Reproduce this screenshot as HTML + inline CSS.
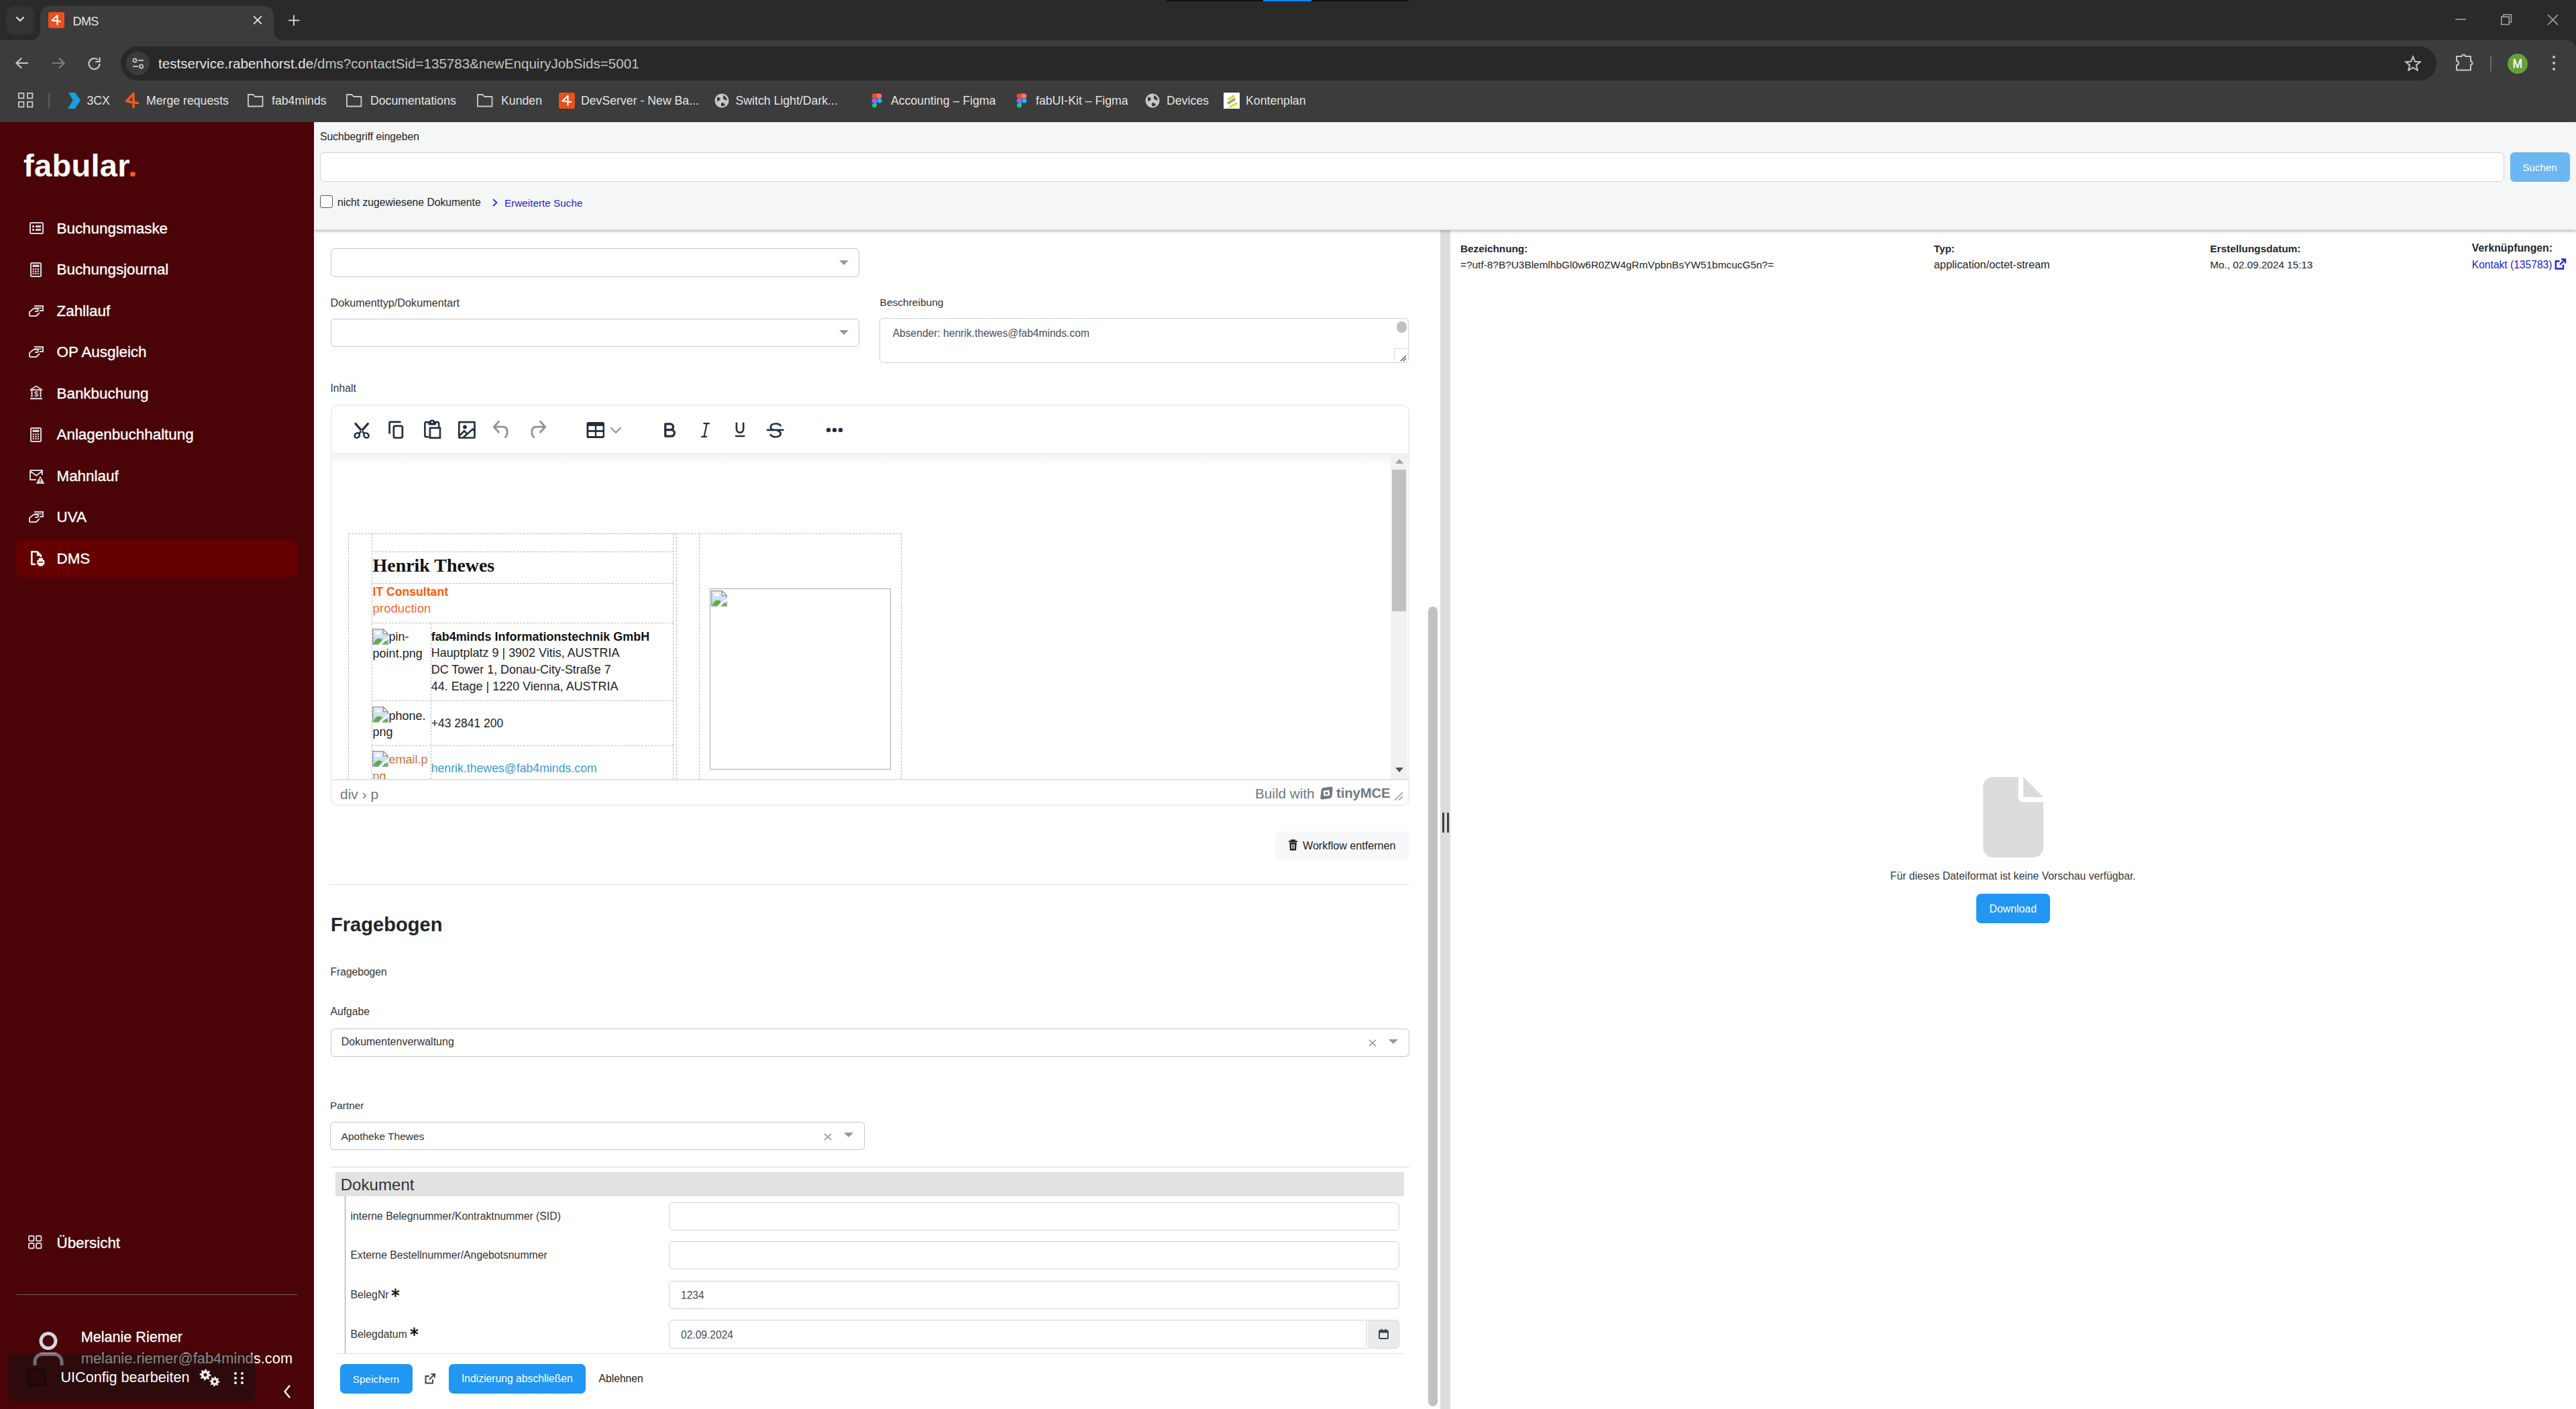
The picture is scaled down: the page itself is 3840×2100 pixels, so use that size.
<!DOCTYPE html><html><head><meta charset='utf-8'><title>DMS</title><style>html,body{margin:0;padding:0;width:3840px;height:2100px;overflow:hidden;background:#fff;}body{position:relative;font-family:'Liberation Sans',sans-serif;}.a{position:absolute;}.t{white-space:nowrap;}</style></head><body>
<div class='a' style='left:0.00px;top:0.00px;width:3840.00px;height:80.00px;background:#2a2a2a;'></div>
<div class='a' style='left:1739.00px;top:0.00px;width:361.00px;height:2.00px;background:#101010;'></div>
<div class='a' style='left:1883.00px;top:0.00px;width:72.00px;height:2.00px;background:#0a84ff;'></div>
<div class='a' style='left:9.00px;top:9.00px;width:42.00px;height:42.00px;background:#333333;border-radius:12px;'></div>
<svg class='a' style='left:23.00px;top:24.00px;' width='14.00' height='10.00' viewBox='0 0 14 10'><path d='M2 2 L7 7 L12 2' fill='none' stroke='#e3e3e3' stroke-width='2.2' stroke-linecap='round' stroke-linejoin='round'/></svg>
<div class='a' style='left:60.00px;top:9.00px;width:348.00px;height:51.00px;background:#3c3c3c;border-radius:14px 14px 0 0;'></div>
<svg class='a' style='left:46.00px;top:46.00px;' width='14.00' height='14.00' viewBox='0 0 14 14'><path d='M14 0 V14 H0 A14 14 0 0 0 14 0Z' fill='#3c3c3c'/></svg>
<svg class='a' style='left:408.00px;top:46.00px;' width='14.00' height='14.00' viewBox='0 0 14 14'><path d='M0 0 V14 H14 A14 14 0 0 1 0 0Z' fill='#3c3c3c'/></svg>
<div class='a' style='left:72.00px;top:18.00px;width:24.00px;height:24.00px;background:#e8501e;border-radius:3px;'></div>
<svg class='a' style='left:72.00px;top:18.00px;' width='24.00' height='24.00' viewBox='0 0 24 24'><path d='M13.5 5 L5.5 12.5 L18 14 M13.5 5 V18.6' fill='none' stroke='#fff' stroke-width='2.2' stroke-linecap='round' stroke-linejoin='round'/></svg>
<div class='a t' style="left:108.60px;top:22.70px;font-size:18px;line-height:18px;color:#e3e3e3;letter-spacing:-0.7px;">DMS</div>
<svg class='a' style='left:377.00px;top:23.00px;' width='14.00' height='14.00' viewBox='0 0 14 14'><path d='M1.8 1.8 L12.2 12.2 M12.2 1.8 L1.8 12.2' stroke='#e3e3e3' stroke-width='1.9' stroke-linecap='square'/></svg>
<svg class='a' style='left:429.00px;top:21.00px;' width='18.00' height='18.00' viewBox='0 0 18 18'><path d='M9 2.2 V16.6 M1.8 9.4 H16.6' stroke='#dcdcdc' stroke-width='1.9' stroke-linecap='round'/></svg>
<svg class='a' style='left:3660.00px;top:28.00px;' width='17.00' height='3.00' viewBox='0 0 17 3'><rect x='0' y='0' width='16' height='1.6' fill='#a2a2a2'/></svg>
<svg class='a' style='left:3728.00px;top:21.00px;' width='17.00' height='17.00' viewBox='0 0 17 17'><rect x='0.8' y='4' width='11.5' height='11.5' fill='none' stroke='#a2a2a2' stroke-width='1.6'/><path d='M4 4 V0.8 H15.5 V12.3 H12.3' fill='none' stroke='#a2a2a2' stroke-width='1.6'/></svg>
<svg class='a' style='left:3797.00px;top:21.00px;' width='17.00' height='17.00' viewBox='0 0 17 17'><path d='M1 1 L16 16 M16 1 L1 16' stroke='#a2a2a2' stroke-width='1.6'/></svg>
<div class='a' style='left:0.00px;top:60.00px;width:3840.00px;height:122.00px;background:#3c3c3c;border-radius:14px 14px 0 0;'></div>
<div class='a' style='left:0.00px;top:60.00px;width:60.00px;height:20.00px;background:#3c3c3c;'></div>
<svg class='a' style='left:22.00px;top:84.00px;' width='22.00' height='20.00' viewBox='0 0 22 20'><path d='M20 10 H3 M10 2.5 L2.5 10 L10 17.5' fill='none' stroke='#c7c7c7' stroke-width='2.2' stroke-linejoin='miter'/></svg>
<svg class='a' style='left:76.00px;top:84.00px;' width='22.00' height='20.00' viewBox='0 0 22 20'><path d='M2 10 H19 M12 2.5 L19.5 10 L12 17.5' fill='none' stroke='#7d7d7d' stroke-width='2.2'/></svg>
<svg class='a' style='left:130.00px;top:84.00px;' width='22.00' height='22.00' viewBox='0 0 22 22'><path d='M18.5 11 A8 8 0 1 1 16 5.2' fill='none' stroke='#c7c7c7' stroke-width='2.2'/><path d='M18.5 1.5 V8 H12' fill='none' stroke='#c7c7c7' stroke-width='2.2'/></svg>
<div class='a' style='left:180.00px;top:69.00px;width:3452.00px;height:51.00px;background:#282828;border-radius:26px;'></div>
<div class='a' style='left:188.00px;top:77.00px;width:35.00px;height:35.00px;background:#3c3c3c;border-radius:18px;'></div>
<svg class='a' style='left:196.00px;top:85.00px;' width='20.00' height='20.00' viewBox='0 0 20 20'><circle cx='5' cy='5' r='2.6' fill='none' stroke='#c7c7c7' stroke-width='1.8'/><path d='M10 5 H18' stroke='#c7c7c7' stroke-width='1.8'/><circle cx='14.5' cy='14' r='2.6' fill='none' stroke='#c7c7c7' stroke-width='1.8'/><path d='M2 14 H10' stroke='#c7c7c7' stroke-width='1.8'/></svg>
<div class='a t' style="left:236.00px;top:85.29px;font-size:20.6px;line-height:20.6px;color:#e3e3e3;">testservice.rabenhorst.de<span style='color:#c2c2c2'>/dms?contactSid=135783&amp;newEnquiryJobSids=5001</span></div>
<svg class='a' style='left:3584.00px;top:82.00px;' width='26.00' height='24.00' viewBox='0 0 26 24'><path d='M13 2.5 L16 9.8 L23.8 10.3 L17.8 15.2 L19.8 22.8 L13 18.6 L6.2 22.8 L8.2 15.2 L2.2 10.3 L10 9.8Z' fill='none' stroke='#c7c7c7' stroke-width='2' stroke-linejoin='miter'/></svg>
<svg class='a' style='left:3660.00px;top:79.00px;' width='28.00' height='28.00' viewBox='0 0 28 28'><path d='M2 5 H10 A2.5 2.5 0 0 1 15 5 H23 V12.5 A2.5 2.5 0 0 1 23 17.5 V25.5 H2 V18 A3 3 0 0 0 2 12Z' fill='none' stroke='#c7c7c7' stroke-width='2' stroke-linejoin='round'/></svg>
<div class='a' style='left:3711.50px;top:83.00px;width:2.00px;height:23.00px;background:#6a6a6a;'></div>
<div class='a' style='left:3738.00px;top:80.00px;width:30.00px;height:30.00px;background:#68a03a;border-radius:50%;'></div>
<div class='a t' style="left:3745.50px;top:86.62px;font-size:17.5px;line-height:17.5px;color:#ffffff;-webkit-text-stroke:0.4px #fff;">M</div>
<div class='a' style='left:3805.00px;top:83.00px;width:4.00px;height:4.00px;background:#c7c7c7;border-radius:50%;'></div>
<div class='a' style='left:3805.00px;top:92.00px;width:4.00px;height:4.00px;background:#c7c7c7;border-radius:50%;'></div>
<div class='a' style='left:3805.00px;top:101.00px;width:4.00px;height:4.00px;background:#c7c7c7;border-radius:50%;'></div>
<svg class='a' style='left:27.00px;top:138.00px;' width='24.00' height='24.00' viewBox='0 0 24 24'><rect x='0.9' y='0.9' width='7.5' height='7.5' fill='none' stroke='#c7c7c7' stroke-width='1.8'/><rect x='0.9' y='13.9' width='7.5' height='7.5' fill='none' stroke='#c7c7c7' stroke-width='1.8'/><rect x='13.9' y='0.9' width='7.5' height='7.5' fill='none' stroke='#c7c7c7' stroke-width='1.8'/><rect x='13.9' y='13.9' width='7.5' height='7.5' fill='none' stroke='#c7c7c7' stroke-width='1.8'/></svg>
<div class='a' style='left:72.00px;top:139.00px;width:2.00px;height:22.00px;background:#5e5e5e;'></div>
<svg class='a' style='left:100.00px;top:137.00px;' width='21.00' height='26.00' viewBox='0 0 21 26'><path d='M2 1 H12 L20 12.6 L11.7 25 H1 L8.75 12.6Z' fill='#1a9ee0'/></svg>
<div class='a t' style="left:129.50px;top:142.26px;font-size:17.7px;line-height:17.7px;color:#e3e3e3;">3CX</div>
<svg class='a' style='left:184.00px;top:136.00px;' width='26.00' height='28.00' viewBox='0 0 26 28'><path d='M15 3.5 L4.5 15 L21.5 17.5 M15 3.5 V23.5' fill='none' stroke='#f05a1a' stroke-width='3.6' stroke-linecap='round' stroke-linejoin='round'/></svg>
<div class='a t' style="left:218.00px;top:142.26px;font-size:17.7px;line-height:17.7px;color:#e3e3e3;">Merge requests</div>
<svg class='a' style='left:369.00px;top:139.00px;' width='24.00' height='21.00' viewBox='0 0 24 21'><path d='M1 2 H8.5 L11 5 H22.5 V19.5 H1Z' fill='none' stroke='#c7c7c7' stroke-width='1.9' stroke-linejoin='round'/></svg>
<div class='a t' style="left:405.00px;top:142.26px;font-size:17.7px;line-height:17.7px;color:#e3e3e3;">fab4minds</div>
<svg class='a' style='left:516.00px;top:139.00px;' width='24.00' height='21.00' viewBox='0 0 24 21'><path d='M1 2 H8.5 L11 5 H22.5 V19.5 H1Z' fill='none' stroke='#c7c7c7' stroke-width='1.9' stroke-linejoin='round'/></svg>
<div class='a t' style="left:552.00px;top:142.26px;font-size:17.7px;line-height:17.7px;color:#e3e3e3;">Documentations</div>
<svg class='a' style='left:711.00px;top:139.00px;' width='24.00' height='21.00' viewBox='0 0 24 21'><path d='M1 2 H8.5 L11 5 H22.5 V19.5 H1Z' fill='none' stroke='#c7c7c7' stroke-width='1.9' stroke-linejoin='round'/></svg>
<div class='a t' style="left:747.00px;top:142.26px;font-size:17.7px;line-height:17.7px;color:#e3e3e3;">Kunden</div>
<div class='a' style='left:833.00px;top:138.00px;width:24.00px;height:24.00px;background:#e8501e;border-radius:3px;'></div>
<svg class='a' style='left:833.00px;top:138.00px;' width='24.00' height='24.00' viewBox='0 0 24 24'><path d='M13.5 5 L5.5 12.5 L18 14 M13.5 5 V18.6' fill='none' stroke='#fff' stroke-width='2.2' stroke-linecap='round' stroke-linejoin='round'/></svg>
<div class='a t' style="left:866.00px;top:142.26px;font-size:17.7px;line-height:17.7px;color:#e3e3e3;">DevServer - New Ba...</div>
<svg class='a' style='left:1065.00px;top:139.00px;' width='22.00' height='22.00' viewBox='0 0 22 22'><circle cx='11' cy='11' r='10.5' fill='#c7c7c7'/><path d='M4 6 Q8 5 9 9 Q7 12 4 12 Z M13 3 Q18 5 19 10 Q15 11 13 8Z M11 14 Q15 14 16 18 Q13 20 10 19 Q9 16 11 14Z' fill='#3c3c3c'/></svg>
<div class='a t' style="left:1096.50px;top:142.26px;font-size:17.7px;line-height:17.7px;color:#e3e3e3;">Switch Light/Dark...</div>
<svg class='a' style='left:1299.00px;top:139.00px;' width='16.00' height='23.00' viewBox='0 0 16 23'><path d='M4 0.5 H8 V7.5 H4 A3.5 3.5 0 0 1 4 0.5Z' fill='#f24e1e'/><path d='M8 0.5 H12 A3.5 3.5 0 0 1 12 7.5 H8Z' fill='#ff7262'/><path d='M4 7.5 H8 V14.5 H4 A3.5 3.5 0 0 1 4 7.5Z' fill='#a259ff'/><circle cx='12' cy='11' r='3.5' fill='#1abcfe'/><path d='M4 14.5 H8 V18 A3.5 3.5 0 1 1 4 14.5Z' fill='#0acf83'/></svg>
<div class='a t' style="left:1328.00px;top:142.26px;font-size:17.7px;line-height:17.7px;color:#e3e3e3;">Accounting – Figma</div>
<svg class='a' style='left:1515.00px;top:139.00px;' width='16.00' height='23.00' viewBox='0 0 16 23'><path d='M4 0.5 H8 V7.5 H4 A3.5 3.5 0 0 1 4 0.5Z' fill='#f24e1e'/><path d='M8 0.5 H12 A3.5 3.5 0 0 1 12 7.5 H8Z' fill='#ff7262'/><path d='M4 7.5 H8 V14.5 H4 A3.5 3.5 0 0 1 4 7.5Z' fill='#a259ff'/><circle cx='12' cy='11' r='3.5' fill='#1abcfe'/><path d='M4 14.5 H8 V18 A3.5 3.5 0 1 1 4 14.5Z' fill='#0acf83'/></svg>
<div class='a t' style="left:1544.00px;top:142.26px;font-size:17.7px;line-height:17.7px;color:#e3e3e3;">fabUI-Kit – Figma</div>
<svg class='a' style='left:1707.00px;top:139.00px;' width='22.00' height='22.00' viewBox='0 0 22 22'><circle cx='11' cy='11' r='10.5' fill='#c7c7c7'/><path d='M4 6 Q8 5 9 9 Q7 12 4 12 Z M13 3 Q18 5 19 10 Q15 11 13 8Z M11 14 Q15 14 16 18 Q13 20 10 19 Q9 16 11 14Z' fill='#3c3c3c'/></svg>
<div class='a t' style="left:1739.00px;top:142.26px;font-size:17.7px;line-height:17.7px;color:#e3e3e3;">Devices</div>
<div class='a' style='left:1824.00px;top:138.00px;width:24.00px;height:24.00px;background:#ffffff;'></div>
<svg class='a' style='left:1824.00px;top:138.00px;' width='24.00' height='24.00' viewBox='0 0 24 24'><path d='M6 9 L15 3 L17 6 L8 12Z' fill='#d9dd1a'/><path d='M5 15 L16 8 L18 11 L7 18Z' fill='#9a9a9a'/><path d='M7 21 L19 14 L21 17 L9 23Z' fill='#d9dd1a'/></svg>
<div class='a t' style="left:1857.00px;top:142.26px;font-size:17.7px;line-height:17.7px;color:#e3e3e3;">Kontenplan</div>
<div class='a' style='left:0.00px;top:182.00px;width:468.00px;height:1918.00px;background:#4a0306;'></div>
<div class='a t' style="left:35.00px;top:223.05px;font-size:47px;line-height:47px;color:#ffffff;font-weight:bold;letter-spacing:0.3px;">fabular</div>
<div class='a' style='left:194.00px;top:255.50px;width:7.50px;height:7.50px;background:#f05a22;border-radius:50%;'></div>
<div class='a' style='left:24.00px;top:805.00px;width:419.00px;height:54.50px;background:#650000;border-radius:9px;'></div>
<div class='a t' style="left:84.50px;top:329.56px;font-size:22.4px;line-height:22.4px;color:#ffffff;-webkit-text-stroke:0.35px #fff;">Buchungsmaske</div>
<svg class='a' style='left:44.00px;top:331.00px;' width='21.00' height='18.00' viewBox='0 0 21 18'><rect x='1' y='1' width='19' height='16' rx='1.5' fill='none' stroke='#d9d5de' stroke-width='2'/><rect x='4' y='5' width='3' height='3' fill='#d9d5de'/><rect x='4' y='10' width='3' height='3' fill='#d9d5de'/><rect x='9' y='5' width='8' height='3' fill='#d9d5de'/><rect x='9' y='10' width='8' height='3' fill='#d9d5de'/></svg>
<div class='a t' style="left:84.50px;top:391.06px;font-size:22.4px;line-height:22.4px;color:#ffffff;-webkit-text-stroke:0.35px #fff;">Buchungsjournal</div>
<svg class='a' style='left:45.00px;top:391.10px;' width='18.00' height='22.00' viewBox='0 0 18 22'><rect x='1' y='1' width='15' height='20' rx='1.5' fill='none' stroke='#d9d5de' stroke-width='2'/><rect x='3.5' y='3.5' width='10' height='3.5' fill='#d9d5de'/><rect x='3.5' y='9.0' width='2.4' height='2.2' fill='#d9d5de'/><rect x='3.5' y='12.4' width='2.4' height='2.2' fill='#d9d5de'/><rect x='3.5' y='15.8' width='2.4' height='2.2' fill='#d9d5de'/><rect x='7.1' y='9.0' width='2.4' height='2.2' fill='#d9d5de'/><rect x='7.1' y='12.4' width='2.4' height='2.2' fill='#d9d5de'/><rect x='7.1' y='15.8' width='2.4' height='2.2' fill='#d9d5de'/><rect x='10.7' y='9.0' width='2.4' height='2.2' fill='#d9d5de'/><rect x='10.7' y='12.4' width='2.4' height='2.2' fill='#d9d5de'/><rect x='10.7' y='15.8' width='2.4' height='2.2' fill='#d9d5de'/></svg>
<div class='a t' style="left:84.50px;top:452.56px;font-size:22.4px;line-height:22.4px;color:#ffffff;-webkit-text-stroke:0.35px #fff;">Zahllauf</div>
<svg class='a' style='left:42.00px;top:452.60px;' width='24.00' height='20.00' viewBox='0 0 24 20'><path d='M9 3 H22 V10 H17' fill='none' stroke='#d9d5de' stroke-width='2'/><path d='M9 6 H20' stroke='#d9d5de' stroke-width='1.6'/><path d='M2 18 V12 L8 7 H13 A2 2 0 0 1 13 11 H10 M2 18 H12 L17 13' fill='none' stroke='#d9d5de' stroke-width='2' stroke-linejoin='round'/></svg>
<div class='a t' style="left:84.50px;top:514.06px;font-size:22.4px;line-height:22.4px;color:#ffffff;-webkit-text-stroke:0.35px #fff;">OP Ausgleich</div>
<svg class='a' style='left:42.00px;top:514.10px;' width='24.00' height='20.00' viewBox='0 0 24 20'><path d='M9 3 H22 V10 H17' fill='none' stroke='#d9d5de' stroke-width='2'/><path d='M9 6 H20' stroke='#d9d5de' stroke-width='1.6'/><path d='M2 18 V12 L8 7 H13 A2 2 0 0 1 13 11 H10 M2 18 H12 L17 13' fill='none' stroke='#d9d5de' stroke-width='2' stroke-linejoin='round'/></svg>
<div class='a t' style="left:84.50px;top:575.56px;font-size:22.4px;line-height:22.4px;color:#ffffff;-webkit-text-stroke:0.35px #fff;">Bankbuchung</div>
<svg class='a' style='left:44.00px;top:573.60px;' width='20.00' height='22.00' viewBox='0 0 20 22'><path d='M1.5 7 L10 1.5 L18.5 7 Z' fill='none' stroke='#d9d5de' stroke-width='1.8' stroke-linejoin='round'/><rect x='2.5' y='7' width='2' height='11' fill='#d9d5de'/><rect x='15.5' y='7' width='2' height='11' fill='#d9d5de'/><rect x='1' y='19' width='18' height='2.2' fill='#d9d5de'/><text x='10' y='16.5' font-size='11' font-weight='bold' text-anchor='middle' fill='#d9d5de' font-family='Liberation Sans'>$</text></svg>
<div class='a t' style="left:84.50px;top:637.06px;font-size:22.4px;line-height:22.4px;color:#ffffff;-webkit-text-stroke:0.35px #fff;">Anlagenbuchhaltung</div>
<svg class='a' style='left:45.00px;top:637.10px;' width='18.00' height='22.00' viewBox='0 0 18 22'><rect x='1' y='1' width='15' height='20' rx='1.5' fill='none' stroke='#d9d5de' stroke-width='2'/><rect x='3.5' y='3.5' width='10' height='3.5' fill='#d9d5de'/><rect x='3.5' y='9.0' width='2.4' height='2.2' fill='#d9d5de'/><rect x='3.5' y='12.4' width='2.4' height='2.2' fill='#d9d5de'/><rect x='3.5' y='15.8' width='2.4' height='2.2' fill='#d9d5de'/><rect x='7.1' y='9.0' width='2.4' height='2.2' fill='#d9d5de'/><rect x='7.1' y='12.4' width='2.4' height='2.2' fill='#d9d5de'/><rect x='7.1' y='15.8' width='2.4' height='2.2' fill='#d9d5de'/><rect x='10.7' y='9.0' width='2.4' height='2.2' fill='#d9d5de'/><rect x='10.7' y='12.4' width='2.4' height='2.2' fill='#d9d5de'/><rect x='10.7' y='15.8' width='2.4' height='2.2' fill='#d9d5de'/></svg>
<div class='a t' style="left:84.50px;top:698.56px;font-size:22.4px;line-height:22.4px;color:#ffffff;-webkit-text-stroke:0.35px #fff;">Mahnlauf</div>
<svg class='a' style='left:43.00px;top:697.60px;' width='24.00' height='24.00' viewBox='0 0 24 24'><path d='M2 3 H20 V10 M2 3 V17 H11 M2 4 L11 11 L20 4' fill='none' stroke='#d9d5de' stroke-width='2' stroke-linejoin='round'/><path d='M17 11.5 L23.5 23 H10.5Z' fill='#d9d5de'/><rect x='16.3' y='15' width='1.4' height='4' fill='#4a0306'/><rect x='16.3' y='20' width='1.4' height='1.4' fill='#4a0306'/></svg>
<div class='a t' style="left:84.50px;top:760.06px;font-size:22.4px;line-height:22.4px;color:#ffffff;-webkit-text-stroke:0.35px #fff;">UVA</div>
<svg class='a' style='left:42.00px;top:760.10px;' width='24.00' height='20.00' viewBox='0 0 24 20'><path d='M9 3 H22 V10 H17' fill='none' stroke='#d9d5de' stroke-width='2'/><path d='M9 6 H20' stroke='#d9d5de' stroke-width='1.6'/><path d='M2 18 V12 L8 7 H13 A2 2 0 0 1 13 11 H10 M2 18 H12 L17 13' fill='none' stroke='#d9d5de' stroke-width='2' stroke-linejoin='round'/></svg>
<div class='a t' style="left:84.50px;top:821.56px;font-size:22.4px;line-height:22.4px;color:#ffffff;-webkit-text-stroke:0.35px #fff;">DMS</div>
<svg class='a' style='left:45.00px;top:819.00px;' width='23.00' height='26.00' viewBox='0 0 23 26'><path d='M8 22 H2.3 V3.3 H10.5 L16 8.8 V11.5' fill='none' stroke='#ffffff' stroke-width='2.6' stroke-linejoin='round'/><path d='M10.5 3.3 V9 H16Z' fill='#ffffff' stroke='#ffffff' stroke-width='1.2' stroke-linejoin='round'/><rect x='10.3' y='15.5' width='11' height='7.5' rx='2' fill='#ffffff'/><rect x='12.7' y='12.8' width='6.2' height='3.5' fill='#ffffff'/><rect x='12.5' y='18' width='6.6' height='2' fill='#650000'/><rect x='12.8' y='19.5' width='6' height='5.2' fill='#ffffff'/></svg>
<div class='a t' style="left:84.50px;top:1842.46px;font-size:22.4px;line-height:22.4px;color:#ffffff;-webkit-text-stroke:0.35px #fff;">Übersicht</div>
<svg class='a' style='left:42.00px;top:1841.00px;' width='22.00' height='22.00' viewBox='0 0 22 22'><rect x='1' y='1' width='7.5' height='7.5' rx='1.6' fill='none' stroke='#d9d5de' stroke-width='1.9'/><rect x='1' y='12' width='7.5' height='7.5' rx='1.6' fill='none' stroke='#d9d5de' stroke-width='1.9'/><rect x='12' y='1' width='7.5' height='7.5' rx='1.6' fill='none' stroke='#d9d5de' stroke-width='1.9'/><rect x='12' y='12' width='7.5' height='7.5' rx='1.6' fill='none' stroke='#d9d5de' stroke-width='1.9'/></svg>
<div class='a' style='left:24.00px;top:1928.50px;width:420.00px;height:1.50px;background:#6e5b69;'></div>
<svg class='a' style='left:48.00px;top:1983.00px;' width='48.00' height='52.00' viewBox='0 0 48 52'><circle cx='24' cy='15.5' r='11' fill='none' stroke='#d3d6dd' stroke-width='5'/><path d='M4 50 V46 A11 11 0 0 1 15 35.5 H33 A11 11 0 0 1 44 46 V50' fill='none' stroke='#d3d6dd' stroke-width='5' stroke-linecap='round'/></svg>
<div class='a t' style="left:120.70px;top:1982.14px;font-size:21.6px;line-height:21.6px;color:#ffffff;-webkit-text-stroke:0.3px #fff;">Melanie Riemer</div>
<div class='a t' style="left:120.70px;top:2013.88px;font-size:21.9px;line-height:21.9px;color:#ffffff;">melanie.riemer@fab4minds.com</div>
<div class='a' style='left:12.00px;top:2017.00px;width:368.00px;height:72.00px;background:rgba(20,20,20,0.52);border-radius:10px;'></div>
<div class='a' style='left:41.00px;top:2040.00px;width:27.00px;height:26.00px;border:2px solid #0b0b0b;border-radius:3px;box-sizing:border-box;background:rgba(0,0,0,0.1);'></div>
<div class='a t' style="left:90.50px;top:2041.64px;font-size:21.6px;line-height:21.6px;color:#ffffff;">UIConfig bearbeiten</div>
<svg class='a' style='left:297.00px;top:2040.00px;' width='34.00' height='28.00' viewBox='0 0 34 28'><polygon points='17.50,9.00 17.34,10.66 14.65,11.34 14.09,12.40 15.01,15.01 13.72,16.07 11.34,14.65 10.19,15.00 9.00,17.50 7.34,17.34 6.66,14.65 5.60,14.09 2.99,15.01 1.93,13.72 3.35,11.34 3.00,10.19 0.50,9.00 0.66,7.34 3.35,6.66 3.91,5.60 2.99,2.99 4.28,1.93 6.66,3.35 7.81,3.00 9.00,0.50 10.66,0.66 11.34,3.35 12.40,3.91 15.01,2.99 16.07,4.28 14.65,6.66 15.00,7.81' fill='#ececec'/><circle cx='9' cy='9' r='2.55' fill='#3a1a1c'/><polygon points='30.50,19.00 30.36,20.46 27.99,21.07 27.49,22.00 28.30,24.30 27.17,25.24 25.07,23.99 24.05,24.30 23.00,26.50 21.54,26.36 20.93,23.99 20.00,23.49 17.70,24.30 16.76,23.17 18.01,21.07 17.70,20.05 15.50,19.00 15.64,17.54 18.01,16.93 18.51,16.00 17.70,13.70 18.83,12.76 20.93,14.01 21.95,13.70 23.00,11.50 24.46,11.64 25.07,14.01 26.00,14.51 28.30,13.70 29.24,14.83 27.99,16.93 28.30,17.95' fill='#ececec'/><circle cx='23' cy='19' r='2.25' fill='#3a1a1c'/></svg>
<div class='a' style='left:348.80px;top:2044.80px;width:4.40px;height:4.40px;background:#fff;border-radius:50%;'></div>
<div class='a' style='left:348.80px;top:2051.80px;width:4.40px;height:4.40px;background:#fff;border-radius:50%;'></div>
<div class='a' style='left:348.80px;top:2058.80px;width:4.40px;height:4.40px;background:#fff;border-radius:50%;'></div>
<div class='a' style='left:358.80px;top:2044.80px;width:4.40px;height:4.40px;background:#fff;border-radius:50%;'></div>
<div class='a' style='left:358.80px;top:2051.80px;width:4.40px;height:4.40px;background:#fff;border-radius:50%;'></div>
<div class='a' style='left:358.80px;top:2058.80px;width:4.40px;height:4.40px;background:#fff;border-radius:50%;'></div>
<svg class='a' style='left:421.00px;top:2063.00px;' width='14.00' height='22.00' viewBox='0 0 14 22'><path d='M10.5 2.5 L3.5 11 L10.5 19.5' fill='none' stroke='#fff' stroke-width='2.4' stroke-linecap='round' stroke-linejoin='round'/></svg>
<div class='a' style='left:468.00px;top:182.00px;width:3372.00px;height:161.00px;background:#f5f6f6;border-bottom:1px solid #d5dcdc;box-sizing:border-box;box-shadow:0 2px 4px rgba(0,0,0,0.26);z-index:2;'></div>
<div class='a t' style="left:477.00px;top:195.66px;font-size:15.7px;line-height:15.7px;color:#212529;z-index:4;">Suchbegriff eingeben</div>
<div class='a' style='left:477.00px;top:227.00px;width:3256.00px;height:44.00px;background:#fff;border:1px solid #ced4da;border-radius:6px;box-sizing:border-box;z-index:4;'></div>
<div class='a' style='left:3742.00px;top:227.00px;width:89.00px;height:44.00px;background:#6cb6f2;border-radius:6px;z-index:4;'></div>
<div class='a t' style="left:3760.50px;top:241.97px;font-size:15.1px;line-height:15.1px;color:#ffffff;z-index:4;">Suchen</div>
<div class='a' style='left:477.00px;top:291.00px;width:19.00px;height:19.00px;background:#fff;border:1.5px solid #555;border-radius:3px;box-sizing:border-box;z-index:4;'></div>
<div class='a t' style="left:503.00px;top:293.65px;font-size:15.7px;line-height:15.7px;color:#212529;z-index:4;">nicht zugewiesene Dokumente</div>
<svg class='a' style='left:733.00px;top:296.00px;z-index:4;' width='10.00' height='12.00' viewBox='0 0 10 12'><path d='M2 1 L7.5 6 L2 11' fill='none' stroke='#2020e0' stroke-width='1.7'/></svg>
<div class='a t' style="left:752.00px;top:294.50px;font-size:15.3px;line-height:15.3px;color:#1f1fdc;z-index:4;">Erweiterte Suche</div>
<div class='a' style='left:2147.00px;top:343.00px;width:15.00px;height:1757.00px;background:#dddddd;'></div>
<div class='a' style='left:2150.00px;top:1211.00px;width:3.00px;height:30.00px;background:#3a3f44;border-radius:1px;'></div>
<div class='a' style='left:2156.50px;top:1211.00px;width:3.00px;height:30.00px;background:#3a3f44;border-radius:1px;'></div>
<div class='a' style='left:2129.00px;top:904.00px;width:14.00px;height:1192.00px;background:#c2c2c2;border-radius:7px;'></div>
<div class='a' style='left:492.50px;top:370.30px;width:788.10px;height:43.10px;background:#fff;border:1px solid #c6c6c6;border-radius:6px;box-sizing:border-box;'></div>
<svg class='a' style='left:1251.00px;top:388.00px;' width='14.00' height='8.00' viewBox='0 0 14 8'><path d='M0 0 H14 L7 7Z' fill='#999'/></svg>
<div class='a t' style="left:492.50px;top:442.63px;font-size:16.2px;line-height:16.2px;color:#333;">Dokumenttyp/Dokumentart</div>
<div class='a' style='left:492.50px;top:474.50px;width:788.10px;height:42.00px;background:#fff;border:1px solid #c6c6c6;border-radius:6px;box-sizing:border-box;'></div>
<svg class='a' style='left:1251.00px;top:492.00px;' width='14.00' height='8.00' viewBox='0 0 14 8'><path d='M0 0 H14 L7 7Z' fill='#999'/></svg>
<div class='a t' style="left:1311.60px;top:442.82px;font-size:15.5px;line-height:15.5px;color:#333;">Beschreibung</div>
<div class='a' style='left:1311.40px;top:474.00px;width:789.10px;height:67.30px;background:#fff;border:1px solid #ccd3db;border-radius:6px;box-sizing:border-box;'></div>
<div class='a t' style="left:1330.70px;top:488.74px;font-size:15.6px;line-height:15.6px;color:#495057;">Absender: henrik.thewes@fab4minds.com</div>
<div class='a' style='left:2082.00px;top:479.00px;width:15.00px;height:17.00px;background:#c1c1c1;border-radius:8px;'></div>
<div class='a' style='left:2078.00px;top:519.00px;width:21.50px;height:21.50px;border-left:1px solid #ddd;border-top:1px solid #ddd;box-sizing:border-box;'></div>
<svg class='a' style='left:2086.00px;top:528.00px;' width='11.00' height='11.00' viewBox='0 0 11 11'><path d='M10 2 L2 10 M10 6 L6 10' stroke='#444' stroke-width='1.3'/></svg>
<div class='a t' style="left:492.50px;top:571.15px;font-size:15.7px;line-height:15.7px;color:#333;">Inhalt</div>
<div class='a' style='left:493.00px;top:603.00px;width:1607.50px;height:598.00px;border:2px solid #eeeeee;border-radius:10px;box-sizing:border-box;background:#fff;'></div>
<div class='a' style='left:495.00px;top:674.00px;width:1603.50px;height:22.00px;background:linear-gradient(#f0f1f2,#ffffff);'></div>
<div class='a' style='left:495.00px;top:605.00px;width:1603.50px;height:70.00px;background:#fff;border-radius:8px 8px 0 0;'></div>
<svg class='a' style='left:500.00px;top:620.00px;' width='780.00' height='40.00' viewBox='500 620 780 40'><path d='M530 631.5 L539.2 642 M548.4 631.5 L539.2 642' stroke='#222f3e' stroke-width='3.4' stroke-linecap='round'/><path d='M539.2 642 L534.5 646.5 M539.2 642 L543.5 646.5' stroke='#222f3e' stroke-width='2.6'/><ellipse cx='532.3' cy='649' rx='3.9' ry='3.3' transform='rotate(-35 532.3 649)' fill='none' stroke='#222f3e' stroke-width='2.4'/><ellipse cx='546' cy='649' rx='3.9' ry='3.3' transform='rotate(35 546 649)' fill='none' stroke='#222f3e' stroke-width='2.4'/><circle cx='539.2' cy='642.2' r='1.1' fill='#fff'/><path d='M580.6 646.5 V630.5 Q580.6 628.8 582.3 628.8 H597.6' fill='none' stroke='#222f3e' stroke-width='2.7'/><rect x='586.9' y='634.9' width='13' height='17.6' rx='2.2' fill='none' stroke='#222f3e' stroke-width='2.7'/><path d='M639.5 651.3 H635.6 Q633.4 651.3 633.4 649.1 V631.3 Q633.4 629.1 635.6 629.1 H652 Q654.2 629.1 654.2 631.3 V637' fill='none' stroke='#222f3e' stroke-width='2.6'/><rect x='641' y='637.8' width='15' height='14.8' fill='#fff' stroke='#222f3e' stroke-width='2.6'/><rect x='638.3' y='629' width='11.8' height='4.6' rx='1.5' fill='#222f3e'/><circle cx='644.2' cy='629.4' r='4' fill='#222f3e'/><circle cx='644.2' cy='629.2' r='1.3' fill='#fff'/><rect x='684.3' y='629.1' width='23.2' height='23.4' rx='0.8' fill='none' stroke='#222f3e' stroke-width='2.7'/><circle cx='693' cy='636.4' r='2.9' fill='#222f3e'/><path d='M684.8 649.5 L692 642.3 L696.6 646.9 M690.6 652 L704.6 639.6 L707.6 642.6' fill='none' stroke='#222f3e' stroke-width='2.6' stroke-linejoin='miter'/><path d='M743.5 628.2 L736.3 636.2 L743.5 644.2 M736.5 636.2 H749.5 Q756.2 636.2 756.2 643.8 Q756.2 648.5 753.2 651.6' fill='none' stroke='#8b939a' stroke-width='2.8' stroke-linecap='round' stroke-linejoin='round'/><path d='M805.5 628.2 L812.7 636.2 L805.5 644.2 M812.5 636.2 H799.5 Q792.8 636.2 792.8 643.8 Q792.8 648.5 795.8 651.6' fill='none' stroke='#8b939a' stroke-width='2.8' stroke-linecap='round' stroke-linejoin='round'/><rect x='874.5' y='629' width='26.5' height='23.9' rx='2.6' fill='#222f3e'/><rect x='877.4' y='635' width='9.4' height='6.1' fill='#fff'/><rect x='889.2' y='635' width='9.4' height='6.1' fill='#fff'/><rect x='877.4' y='643.9' width='9.4' height='6.1' fill='#fff'/><rect x='889.2' y='643.9' width='9.4' height='6.1' fill='#fff'/><path d='M910.2 637.2 L918 644.8 L925.6 637.2' fill='none' stroke='#8b939a' stroke-width='2.2'/><path d='M990.5 631.9 H999.2 A4.35 4.35 0 0 1 999.2 640.6 H991.8 M991.8 640.6 H1000.6 A4.75 4.75 0 0 1 1000.6 650.1 H990.5 M991.8 631.9 V650.1' fill='none' stroke='#222f3e' stroke-width='3.3' stroke-linejoin='round'/><path d='M1048.5 631.1 H1057.8 M1045.2 650.9 H1054 M1053.7 631.1 L1049.6 650.9' fill='none' stroke='#222f3e' stroke-width='2.2'/><path d='M1097.9 630.8 V639.6 A5.15 5.15 0 0 0 1108.2 639.6 V630.8' fill='none' stroke='#222f3e' stroke-width='2.6' stroke-linecap='round'/><path d='M1097 650 H1109.3' stroke='#222f3e' stroke-width='2.6' stroke-linecap='round'/><path d='M1144 640.9 H1167.3' stroke='#222f3e' stroke-width='2.8' stroke-linecap='round'/><path d='M1163.6 634.3 C1161.3 630.9 1153.8 630.6 1150.6 633.1 C1147.6 635.7 1148.6 639.3 1152.2 640.6 M1158.8 641.4 C1163.6 643 1165.2 646.8 1162 649.6 C1158.6 652.4 1151.2 651.6 1148.6 647.9' fill='none' stroke='#222f3e' stroke-width='2.6' stroke-linecap='round'/><circle cx='1235' cy='640.9' r='3.2' fill='#222f3e'/><circle cx='1244' cy='640.9' r='3.2' fill='#222f3e'/><circle cx='1253' cy='640.9' r='3.2' fill='#222f3e'/></svg>
<div class='a' style='left:2073.00px;top:675.00px;width:25.00px;height:486.00px;background:#f1f1f1;'></div>
<svg class='a' style='left:2080.00px;top:684.00px;' width='12.00' height='8.00' viewBox='0 0 12 8'><path d='M0 7 H12 L6 0Z' fill='#a3a3a3'/></svg>
<div class='a' style='left:2075.00px;top:700.00px;width:21.00px;height:211.00px;background:#c1c1c1;'></div>
<svg class='a' style='left:2080.00px;top:1144.00px;' width='12.00' height='8.00' viewBox='0 0 12 8'><path d='M0 0 H12 L6 7Z' fill='#505050'/></svg>
<div class='a' style='left:495.00px;top:1161.00px;width:1603.50px;height:1.50px;background:#e3e3e3;'></div>
<div class='a t' style="left:507.00px;top:1172.65px;font-size:21px;line-height:21px;color:#6e7880;">div › p</div>
<div class='a t' style="left:1871.00px;top:1173.40px;font-size:20.7px;line-height:20.7px;color:#6f7882;">Build with</div>
<svg class='a' style='left:1968.00px;top:1172.00px;' width='19.00' height='20.00' viewBox='0 0 19 20'><path d='M5 2 L16 0.5 Q19 0.5 18.6 3.5 L17.5 14 Q17 17.5 14 18 L3 19.5 Q0 19.5 0.4 16.5 L1.5 6 Q2 2.5 5 2Z' fill='#6f7882'/><rect x='5' y='6' width='9' height='8' fill='#fff' transform='rotate(-7 9.5 10)'/><rect x='7.5' y='8.5' width='4' height='3.4' fill='#6f7882' transform='rotate(-7 9.5 10)'/></svg>
<div class='a t' style="left:1992.00px;top:1171.54px;font-size:20.3px;line-height:20.3px;color:#6f7882;font-weight:bold;letter-spacing:-0.1px;">tinyMCE</div>
<svg class='a' style='left:2078.00px;top:1180.00px;' width='14.00' height='13.00' viewBox='0 0 14 13'><path d='M13 1 L1 12.5 M13 7 L7 12.5' stroke='#8a9199' stroke-width='1.5'/></svg>
<div class='a' style='left:519.20px;top:795.20px;width:825.00px;height:365.80px;border:1px dashed #bbbbbb;border-bottom:none;box-sizing:border-box;'></div>
<div class='a' style='left:554.00px;top:795.40px;width:449.50px;height:365.60px;border-left:1px dashed #bbbbbb;border-right:1px dashed #bbbbbb;box-sizing:border-box;'></div>
<div class='a' style='left:1007.80px;top:795.40px;width:35.60px;height:365.60px;border-left:1px dashed #bbbbbb;border-right:1px dashed #bbbbbb;box-sizing:border-box;'></div>
<div class='a' style='left:554.00px;top:822.00px;width:449.50px;height:1.00px;border-top:1px dashed #bbbbbb;'></div>
<div class='a' style='left:554.00px;top:868.80px;width:449.50px;height:1.00px;border-top:1px dashed #bbbbbb;'></div>
<div class='a' style='left:554.00px;top:928.00px;width:449.50px;height:1.00px;border-top:1px dashed #bbbbbb;'></div>
<div class='a' style='left:554.00px;top:1044.20px;width:449.50px;height:1.00px;border-top:1px dashed #bbbbbb;'></div>
<div class='a' style='left:554.00px;top:1110.80px;width:449.50px;height:1.00px;border-top:1px dashed #bbbbbb;'></div>
<div class='a' style='left:554.00px;top:795.40px;width:449.50px;height:1.00px;border-top:1px dashed #bbbbbb;'></div>
<div class='a' style='left:642.40px;top:928.60px;width:1.00px;height:232.40px;border-left:1px dashed #bbbbbb;'></div>
<div class='a t' style="left:555.60px;top:828.54px;font-size:27.9px;line-height:27.9px;color:#111;font-weight:bold;font-family:'Liberation Serif',serif;">Henrik Thewes</div>
<div class='a t' style="left:555.60px;top:874.34px;font-size:17.6px;line-height:17.6px;color:#ff5a00;font-weight:bold;">IT Consultant</div>
<div class='a t' style="left:555.60px;top:898.49px;font-size:18.6px;line-height:18.6px;color:#ff6a2b;">production</div>
<svg class='a' style='left:555.00px;top:936.50px;' width='24.00' height='24.00' viewBox='0 0 24 24'><defs><linearGradient id='bg936' x1='0' y1='0' x2='0' y2='1'><stop offset='0' stop-color='#eaf1fb'/><stop offset='0.25' stop-color='#dbe6f7'/><stop offset='1' stop-color='#bcd0ef'/></linearGradient></defs><path d='M1.5 1.5 H16 L22.5 8 V22.5 H1.5Z' fill='url(#bg936)'/><path d='M4.2 8.3 Q4.2 6.4 6.4 6.4 Q8.2 3.9 10.6 5.6 Q12.4 5.8 12.4 8.3Z' fill='#fff'/><path d='M1.5 22.5 Q5 14.5 9.5 14.5 Q13 14.5 15 16.5 L10 22.5Z' fill='#5aaf3c'/><path d='M15.5 22.5 L20 18 L22.5 20.5 V22.5Z' fill='#5aaf3c'/><path d='M0.75 23.25 V0.75 H16.3 L23.25 7.7 V13.5 M23.25 16.5 V23.25 H15 M10.8 23.25 H0.75' fill='none' stroke='#9a9a9a' stroke-width='1.5'/><path d='M16.3 0.75 V7.7 H23.25Z' fill='#fff' stroke='#9a9a9a' stroke-width='1.5' stroke-linejoin='round'/><path d='M24.5 12.2 L9.5 25' stroke='#fff' stroke-width='2.6'/></svg>
<div class='a t' style="left:579.50px;top:939.70px;font-size:18px;line-height:18px;color:#222;">pin-</div>
<div class='a t' style="left:555.60px;top:964.70px;font-size:18px;line-height:18px;color:#222;">point.png</div>
<div class='a t' style="left:642.70px;top:939.72px;font-size:17.98px;line-height:17.98px;color:#111;font-weight:bold;">fab4minds Informationstechnik GmbH</div>
<div class='a t' style="left:642.70px;top:964.73px;font-size:17.97px;line-height:17.97px;color:#222;">Hauptplatz 9 | 3902 Vitis, AUSTRIA</div>
<div class='a t' style="left:642.70px;top:989.54px;font-size:17.95px;line-height:17.95px;color:#222;">DC Tower 1, Donau-City-Straße 7</div>
<div class='a t' style="left:642.70px;top:1014.74px;font-size:17.95px;line-height:17.95px;color:#222;">44. Etage | 1220 Vienna, AUSTRIA</div>
<svg class='a' style='left:555.00px;top:1053.00px;' width='24.00' height='24.00' viewBox='0 0 24 24'><defs><linearGradient id='bg1053' x1='0' y1='0' x2='0' y2='1'><stop offset='0' stop-color='#eaf1fb'/><stop offset='0.25' stop-color='#dbe6f7'/><stop offset='1' stop-color='#bcd0ef'/></linearGradient></defs><path d='M1.5 1.5 H16 L22.5 8 V22.5 H1.5Z' fill='url(#bg1053)'/><path d='M4.2 8.3 Q4.2 6.4 6.4 6.4 Q8.2 3.9 10.6 5.6 Q12.4 5.8 12.4 8.3Z' fill='#fff'/><path d='M1.5 22.5 Q5 14.5 9.5 14.5 Q13 14.5 15 16.5 L10 22.5Z' fill='#5aaf3c'/><path d='M15.5 22.5 L20 18 L22.5 20.5 V22.5Z' fill='#5aaf3c'/><path d='M0.75 23.25 V0.75 H16.3 L23.25 7.7 V13.5 M23.25 16.5 V23.25 H15 M10.8 23.25 H0.75' fill='none' stroke='#9a9a9a' stroke-width='1.5'/><path d='M16.3 0.75 V7.7 H23.25Z' fill='#fff' stroke='#9a9a9a' stroke-width='1.5' stroke-linejoin='round'/><path d='M24.5 12.2 L9.5 25' stroke='#fff' stroke-width='2.6'/></svg>
<div class='a t' style="left:579.50px;top:1057.70px;font-size:18px;line-height:18px;color:#222;">phone.</div>
<div class='a t' style="left:555.60px;top:1082.40px;font-size:18px;line-height:18px;color:#222;">png</div>
<div class='a t' style="left:642.70px;top:1069.83px;font-size:17.5px;line-height:17.5px;color:#222;">+43 2841 200</div>
<svg class='a' style='left:555.00px;top:1119.00px;' width='24.00' height='24.00' viewBox='0 0 24 24'><defs><linearGradient id='bg1119' x1='0' y1='0' x2='0' y2='1'><stop offset='0' stop-color='#eaf1fb'/><stop offset='0.25' stop-color='#dbe6f7'/><stop offset='1' stop-color='#bcd0ef'/></linearGradient></defs><path d='M1.5 1.5 H16 L22.5 8 V22.5 H1.5Z' fill='url(#bg1119)'/><path d='M4.2 8.3 Q4.2 6.4 6.4 6.4 Q8.2 3.9 10.6 5.6 Q12.4 5.8 12.4 8.3Z' fill='#fff'/><path d='M1.5 22.5 Q5 14.5 9.5 14.5 Q13 14.5 15 16.5 L10 22.5Z' fill='#5aaf3c'/><path d='M15.5 22.5 L20 18 L22.5 20.5 V22.5Z' fill='#5aaf3c'/><path d='M0.75 23.25 V0.75 H16.3 L23.25 7.7 V13.5 M23.25 16.5 V23.25 H15 M10.8 23.25 H0.75' fill='none' stroke='#9a9a9a' stroke-width='1.5'/><path d='M16.3 0.75 V7.7 H23.25Z' fill='#fff' stroke='#9a9a9a' stroke-width='1.5' stroke-linejoin='round'/><path d='M24.5 12.2 L9.5 25' stroke='#fff' stroke-width='2.6'/></svg>
<div class='a t' style="left:579.50px;top:1123.40px;font-size:18px;line-height:18px;color:#c8743b;">email.p</div>
<div class='a' style='left:555px;top:1141px;width:80px;height:20px;overflow:hidden;'><div class='a t' style='left:0.6px;top:7.3px;font-size:18px;line-height:18px;color:#c8743b'>ng</div></div>
<div class='a t' style="left:642.70px;top:1136.65px;font-size:17.7px;line-height:17.7px;color:#3d9ad6;">henrik.thewes@fab4minds.com</div>
<div class='a' style='left:1058.00px;top:877.40px;width:269.70px;height:269.20px;border:1px solid #aaaaaa;box-sizing:border-box;'></div>
<svg class='a' style='left:1060.00px;top:880.00px;' width='24.00' height='24.00' viewBox='0 0 24 24'><defs><linearGradient id='bg880' x1='0' y1='0' x2='0' y2='1'><stop offset='0' stop-color='#eaf1fb'/><stop offset='0.25' stop-color='#dbe6f7'/><stop offset='1' stop-color='#bcd0ef'/></linearGradient></defs><path d='M1.5 1.5 H16 L22.5 8 V22.5 H1.5Z' fill='url(#bg880)'/><path d='M4.2 8.3 Q4.2 6.4 6.4 6.4 Q8.2 3.9 10.6 5.6 Q12.4 5.8 12.4 8.3Z' fill='#fff'/><path d='M1.5 22.5 Q5 14.5 9.5 14.5 Q13 14.5 15 16.5 L10 22.5Z' fill='#5aaf3c'/><path d='M15.5 22.5 L20 18 L22.5 20.5 V22.5Z' fill='#5aaf3c'/><path d='M0.75 23.25 V0.75 H16.3 L23.25 7.7 V13.5 M23.25 16.5 V23.25 H15 M10.8 23.25 H0.75' fill='none' stroke='#9a9a9a' stroke-width='1.5'/><path d='M16.3 0.75 V7.7 H23.25Z' fill='#fff' stroke='#9a9a9a' stroke-width='1.5' stroke-linejoin='round'/><path d='M24.5 12.2 L9.5 25' stroke='#fff' stroke-width='2.6'/></svg>
<div class='a' style='left:1901.40px;top:1238.60px;width:199.50px;height:42.90px;background:#f7f8fa;border-radius:7px;'></div>
<svg class='a' style='left:1920.00px;top:1251.00px;' width='15.00' height='17.00' viewBox='0 0 15 17'><path d='M1 3 H14 M5 3 V1.3 H10 V3' fill='none' stroke='#222' stroke-width='2'/><path d='M2.2 4.5 H12.8 L12 16.5 H3Z' fill='#222'/><path d='M5.5 7 V14 M7.5 7 V14 M9.5 7 V14' stroke='#f7f8fa' stroke-width='1.1'/></svg>
<div class='a t' style="left:1942.00px;top:1252.32px;font-size:16.1px;line-height:16.1px;color:#222;">Workflow entfernen</div>
<div class='a' style='left:492.00px;top:1317.50px;width:1609.00px;height:1.00px;background:#e2e5ec;'></div>
<div class='a t' style="left:493.00px;top:1364.27px;font-size:29.1px;line-height:29.1px;color:#212529;font-weight:bold;">Fragebogen</div>
<div class='a t' style="left:492.50px;top:1440.74px;font-size:15.6px;line-height:15.6px;color:#333;">Fragebogen</div>
<div class='a t' style="left:492.50px;top:1500.25px;font-size:15.7px;line-height:15.7px;color:#333;">Aufgabe</div>
<div class='a' style='left:492.50px;top:1532.50px;width:1608.20px;height:42.00px;background:#fff;border:1px solid #c6c6c6;border-radius:6px;box-sizing:border-box;'></div>
<div class='a t' style="left:508.70px;top:1545.40px;font-size:16px;line-height:16px;color:#333;">Dokumentenverwaltung</div>
<svg class='a' style='left:2040.00px;top:1549.00px;' width='12.00' height='11.00' viewBox='0 0 12 11'><path d='M1 0.8 L11 10.2 M11 0.8 L1 10.2' stroke='#999' stroke-width='1.6'/></svg>
<svg class='a' style='left:2070.00px;top:1549.00px;' width='14.00' height='8.00' viewBox='0 0 14 8'><path d='M0 0 H14 L7 7Z' fill='#999'/></svg>
<div class='a t' style="left:492.00px;top:1639.91px;font-size:15.4px;line-height:15.4px;color:#333;">Partner</div>
<div class='a' style='left:492.00px;top:1671.60px;width:796.50px;height:42.60px;background:#fff;border:1px solid #c6c6c6;border-radius:6px;box-sizing:border-box;'></div>
<div class='a t' style="left:508.60px;top:1685.83px;font-size:15.5px;line-height:15.5px;color:#333;">Apotheke Thewes</div>
<svg class='a' style='left:1228.00px;top:1689.00px;' width='12.00' height='11.00' viewBox='0 0 12 11'><path d='M1 0.8 L11 10.2 M11 0.8 L1 10.2' stroke='#999' stroke-width='1.6'/></svg>
<svg class='a' style='left:1258.00px;top:1688.00px;' width='14.00' height='8.00' viewBox='0 0 14 8'><path d='M0 0 H14 L7 7Z' fill='#999'/></svg>
<div class='a' style='left:492.00px;top:1739.00px;width:1609.00px;height:1.00px;background:#dedede;'></div>
<div class='a' style='left:500.20px;top:1747.00px;width:1592.80px;height:35.60px;background:#e2e2e2;'></div>
<div class='a t' style="left:507.70px;top:1753.92px;font-size:24.1px;line-height:24.1px;color:#333;">Dokument</div>
<div class='a' style='left:513.80px;top:1782.60px;width:1.20px;height:234.40px;background:#9a9a9a;'></div>
<div class='a' style='left:500.00px;top:2017.00px;width:1593.00px;height:1.00px;background:#dfdfdf;'></div>
<div class='a t' style="left:522.50px;top:1804.57px;font-size:15.8px;line-height:15.8px;color:#333;">interne Belegnummer/Kontraktnummer (SID)</div>
<div class='a' style='left:996.50px;top:1791.50px;width:1089.10px;height:42.00px;background:#fff;border:1px solid #ccd3db;border-radius:6px;box-sizing:border-box;'></div>
<div class='a t' style="left:522.50px;top:1863.27px;font-size:15.8px;line-height:15.8px;color:#333;">Externe Bestellnummer/Angebotsnummer</div>
<div class='a' style='left:996.50px;top:1849.50px;width:1089.10px;height:42.80px;background:#fff;border:1px solid #ccd3db;border-radius:6px;box-sizing:border-box;'></div>
<div class='a t' style="left:522.50px;top:1922.07px;font-size:15.8px;line-height:15.8px;color:#333;">BelegNr</div>
<div class='a' style='left:996.50px;top:1908.50px;width:1089.10px;height:42.20px;background:#fff;border:1px solid #ccd3db;border-radius:6px;box-sizing:border-box;'></div>
<div class='a t' style="left:1015.00px;top:1923.04px;font-size:15.6px;line-height:15.6px;color:#495057;">1234</div>
<div class='a t' style="left:522.50px;top:1980.87px;font-size:15.8px;line-height:15.8px;color:#333;">Belegdatum</div>
<div class='a' style='left:996.50px;top:1966.50px;width:1041.10px;height:43.00px;background:#fff;border:1px solid #ccd3db;border-radius:6px 0 0 6px;box-sizing:border-box;'></div>
<div class='a' style='left:2040.30px;top:1966.50px;width:45.30px;height:43.00px;background:#e9ecef;border:1px solid #d5d9de;border-radius:0 6px 6px 0;box-sizing:border-box;'></div>
<svg class='a' style='left:2055.00px;top:1980.00px;' width='15.00' height='16.00' viewBox='0 0 15 16'><rect x='1' y='3' width='13' height='12' rx='1.5' fill='none' stroke='#444' stroke-width='2'/><rect x='1' y='3' width='13' height='3.5' fill='#444'/><path d='M4.5 0.5 V3 M10.5 0.5 V3' stroke='#444' stroke-width='1.6'/></svg>
<div class='a t' style="left:1015.00px;top:1981.84px;font-size:15.6px;line-height:15.6px;color:#495057;">02.09.2024</div>
<svg class='a' style='left:583.00px;top:1919.50px;' width='13.00' height='14.00' viewBox='0 0 13 14'><path d='M6.5 0.5 V13 M1 3.6 L12 9.9 M12 3.6 L1 9.9' stroke='#111' stroke-width='2.2'/></svg>
<svg class='a' style='left:611.40px;top:1978.30px;' width='13.00' height='14.00' viewBox='0 0 13 14'><path d='M6.5 0.5 V13 M1 3.6 L12 9.9 M12 3.6 L1 9.9' stroke='#111' stroke-width='2.2'/></svg>
<div class='a' style='left:507.00px;top:2033.40px;width:107.70px;height:43.40px;background:#2196f3;border-radius:7px;'></div>
<div class='a t' style="left:525.80px;top:2047.61px;font-size:15.4px;line-height:15.4px;color:#fff;">Speichern</div>
<svg class='a' style='left:632.00px;top:2046.00px;' width='18.00' height='18.00' viewBox='0 0 18 18'><path d='M13 10 V15.5 H2.5 V5 H8' fill='none' stroke='#444' stroke-width='2'/><path d='M10.5 2 H16 V7.5 M16 2 L8 10' fill='none' stroke='#444' stroke-width='2'/></svg>
<div class='a' style='left:668.90px;top:2033.40px;width:203.90px;height:43.40px;background:#2196f3;border-radius:7px;'></div>
<div class='a t' style="left:688.00px;top:2047.35px;font-size:15.7px;line-height:15.7px;color:#fff;">Indizierung abschließen</div>
<div class='a t' style="left:892.50px;top:2047.35px;font-size:15.7px;line-height:15.7px;color:#222;">Ablehnen</div>
<div class='a t' style="left:2177.00px;top:362.60px;font-size:15.3px;line-height:15.3px;color:#212529;font-weight:bold;">Bezeichnung:</div>
<div class='a t' style="left:2177.00px;top:386.91px;font-size:15.4px;line-height:15.4px;color:#212529;">=?utf-8?B?U3BlemlhbGl0w6R0ZW4gRmVpbnBsYW51bmcucG5n?=</div>
<div class='a t' style="left:2882.80px;top:362.60px;font-size:15.3px;line-height:15.3px;color:#212529;font-weight:bold;">Typ:</div>
<div class='a t' style="left:2882.80px;top:386.14px;font-size:16.3px;line-height:16.3px;color:#212529;">application/octet-stream</div>
<div class='a t' style="left:3294.50px;top:362.51px;font-size:15.4px;line-height:15.4px;color:#212529;font-weight:bold;">Erstellungsdatum:</div>
<div class='a t' style="left:3294.50px;top:387.00px;font-size:15.3px;line-height:15.3px;color:#212529;">Mo., 02.09.2024 15:13</div>
<div class='a t' style="left:3684.80px;top:362.17px;font-size:15.8px;line-height:15.8px;color:#212529;font-weight:bold;">Verknüpfungen:</div>
<div class='a t' style="left:3684.80px;top:386.74px;font-size:15.6px;line-height:15.6px;color:#2020e0;">Kontakt (135783)</div>
<svg class='a' style='left:3808.00px;top:385.00px;' width='18.00' height='17.00' viewBox='0 0 18 17'><path d='M13 9.5 V15.5 H1.8 V4.3 H7.5' fill='none' stroke='#2020e0' stroke-width='2.4'/><path d='M10 1.5 H16 V7.5 M16 1.5 L8 9.5' fill='none' stroke='#2020e0' stroke-width='2.4'/></svg>
<svg class='a' style='left:2955.70px;top:1157.70px;' width='90.30' height='120.00' viewBox='0 0 384 512'><path d='M0 64C0 28.7 28.7 0 64 0H224V128c0 17.7 14.3 32 32 32H384V448c0 35.3-28.7 64-64 64H64c-35.3 0-64-28.7-64-64V64zm384 64H256V0L384 128z' fill='#dcdcdc'/></svg>
<div class='a t' style="left:2817.80px;top:1297.61px;font-size:15.75px;line-height:15.75px;color:#343a40;">Für dieses Dateiformat ist keine Vorschau verfügbar.</div>
<div class='a' style='left:2946.00px;top:1332.00px;width:110.00px;height:43.80px;background:#2196f3;border-radius:7px;'></div>
<div class='a t' style="left:2965.50px;top:1346.53px;font-size:15.85px;line-height:15.85px;color:#fff;">Download</div>
</body></html>
